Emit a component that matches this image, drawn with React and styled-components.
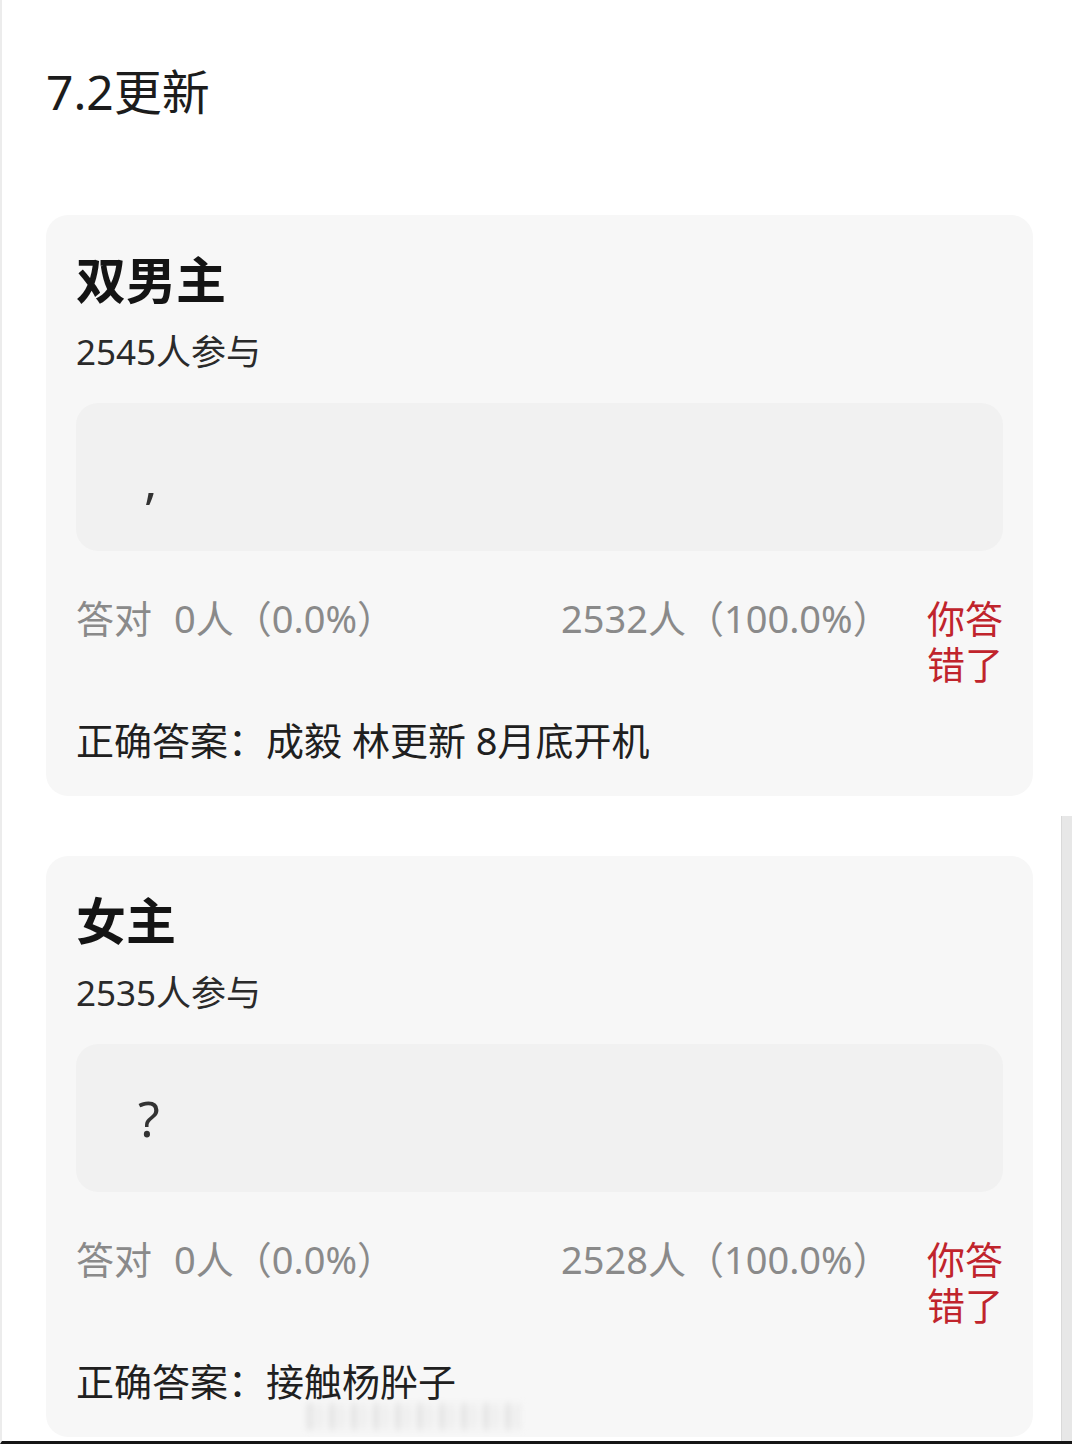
import React from 'react';
import styled, { createGlobalStyle } from 'styled-components';

const GlobalStyle = createGlobalStyle`
    html, body {
        margin: 0;
        padding: 0;
        background: #ffffff;
    }
    body {
        font-family: "Noto Sans", "Noto Sans CJK SC", sans-serif;
        color: #222;
    }
`;

const questions = [
    {
        title: '双男主',
        joined: 2545,
        guess: ',',
        rightCount: 0,
        rightPct: '0.0%',
        wrongCount: 2532,
        wrongPct: '100.0%',
        answer: '成毅 林更新 8月底开机',
        isComma: true,
    },
    {
        title: '女主',
        joined: 2535,
        guess: '?',
        rightCount: 0,
        rightPct: '0.0%',
        wrongCount: 2528,
        wrongPct: '100.0%',
        answer: '接触杨肸子',
        isComma: false,
    },
];

export default function App() {
    return (
        <>
            <GlobalStyle />
            <Page>
                <PageTitle>7.2更新</PageTitle>
                <CardList>
                    {questions.map((q) => (
                        <Card key={q.title}>
                            <CardTitle>{q.title}</CardTitle>
                            <Joined>{q.joined}人参与</Joined>
                            <GuessBox>
                                <GuessText $comma={q.isComma}>{q.guess}</GuessText>
                            </GuessBox>
                            <StatsRow>
                                <Stat>
                                    答对<Count>{q.rightCount}人（{q.rightPct}）</Count>
                                </Stat>
                                <Stat>{q.wrongCount}人（{q.wrongPct}）</Stat>
                                <WrongTag>你答错了</WrongTag>
                            </StatsRow>
                            <Answer>正确答案：{q.answer}</Answer>
                        </Card>
                    ))}
                </CardList>
                <Watermark />
            </Page>
            <ScrollThumb />
        </>
    );
}

const Page = styled.div`
    position: relative;
    height: 1444px;
    box-sizing: border-box;
    overflow: hidden;
    padding: 68px 39px 0 44px;
    border-left: 2px solid #ececec;
    border-bottom: 3px solid #151515;
`;

const PageTitle = styled.h1`
    margin: 0;
    font-size: 48px;
    line-height: 48px;
    font-weight: 400;
    color: #1c1c1c;
`;

const CardList = styled.div`
    margin-top: 99px;
    display: flex;
    flex-direction: column;
    gap: 60px;
`;

const Card = styled.div`
    background: #f7f7f7;
    border-radius: 22px;
    padding: 40px 30px 33px;
    display: flex;
    flex-direction: column;
`;

const CardTitle = styled.div`
    font-size: 50px;
    line-height: 50px;
    font-weight: 700;
    color: #141414;
`;

const Joined = styled.div`
    margin-top: 29px;
    font-size: 35px;
    line-height: 36px;
    color: #2a2a2a;
`;

const GuessBox = styled.div`
    margin-top: 33px;
    height: 148px;
    border-radius: 22px;
    background: #f1f1f1;
    display: flex;
    align-items: center;
    padding-left: 60px;
`;

const GuessText = styled.span`
    font-size: 50px;
    line-height: 50px;
    color: #333;
    margin-left: ${(p) => (p.$comma ? '8px' : '2px')};
    margin-top: ${(p) => (p.$comma ? '6px' : '0')};
`;

const StatsRow = styled.div`
    margin-top: 44px;
    display: grid;
    grid-template-columns: 485px 1fr 76px;
    align-items: start;
    font-size: 38px;
    line-height: 46px;
`;

const Stat = styled.div`
    color: #8a8a8a;
    white-space: nowrap;
`;

const Count = styled.span`
    margin-left: 22px;
`;

const WrongTag = styled.div`
    color: #c0242c;
    width: 76px;
`;

const Answer = styled.div`
    margin-top: 30px;
    font-size: 38px;
    line-height: 46px;
    color: #202020;
`;

const Watermark = styled.div`
    position: absolute;
    left: 305px;
    top: 1403px;
    width: 218px;
    height: 27px;
    opacity: 0.35;
    filter: blur(3px);
    background: repeating-linear-gradient(
        90deg,
        #bdbdbd 0 6px,
        #f4f4f4 6px 11px,
        #d2d2d2 11px 15px,
        #f7f7f7 15px 22px
    );
`;

const ScrollThumb = styled.div`
    position: fixed;
    right: 0;
    top: 816px;
    width: 10px;
    height: 625px;
    background: #e7e7e7;
    border-left: 1px solid #d9d9d9;
`;
